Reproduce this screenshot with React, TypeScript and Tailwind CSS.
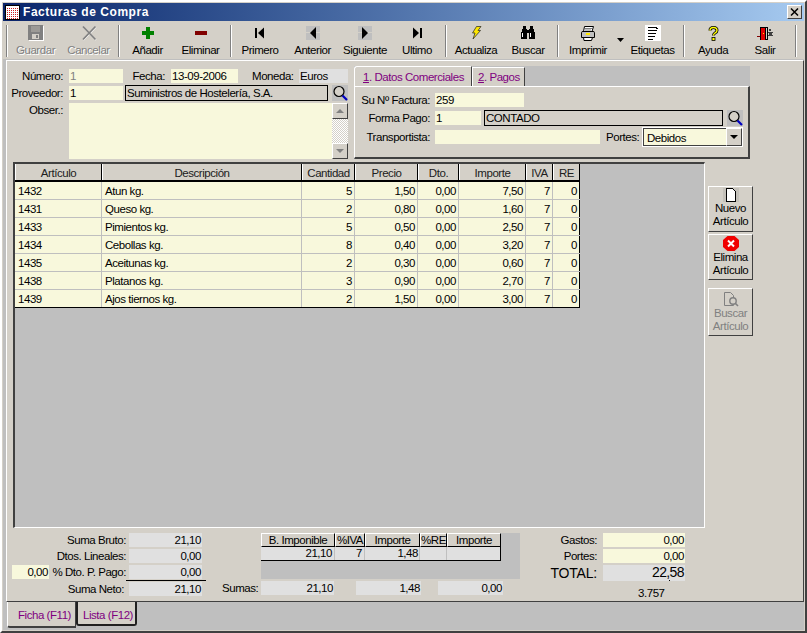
import type { ReactNode } from 'react';

const FONT = "font-['Liberation_Sans',Arial,sans-serif]";

const SaveIcon = () => (
  <svg width="16" height="16" viewBox="0 0 16 16" shapeRendering="crispEdges">
    <rect x="1" y="1" width="15" height="15" fill="#fff" />
    <rect x="0" y="0" width="15" height="15" fill="#808080" />
    <rect x="3" y="1" width="9" height="6" fill="#9c9a96" />
    <rect x="4" y="9" width="7" height="5" fill="#d4d0c8" />
    <rect x="8" y="10" width="2" height="3" fill="#808080" />
  </svg>
);

const CancelIcon = () => (
  <svg width="16" height="16" viewBox="0 0 16 16">
    <path d="M2.5 2 L15 15 M15 2 L2.5 15" stroke="#fff" strokeWidth="1.2" fill="none" />
    <path d="M2 1.5 L14.5 14.5 M14.5 1.5 L2 14.5" stroke="#808080" strokeWidth="1.8" fill="none" />
  </svg>
);

const PlusIcon = () => (
  <svg width="14" height="14" viewBox="0 0 14 14" shapeRendering="crispEdges">
    <rect x="5" y="1" width="4" height="12" fill="#008000" />
    <rect x="1" y="5" width="12" height="4" fill="#008000" />
  </svg>
);

const MinusIcon = () => (
  <svg width="14" height="14" viewBox="0 0 14 14" shapeRendering="crispEdges">
    <rect x="1" y="5" width="12" height="4" fill="#800000" />
  </svg>
);

const FirstIcon = () => (
  <svg width="12" height="12" viewBox="0 0 12 12">
    <rect x="1" y="1" width="2" height="10" fill="#000" />
    <path d="M10 0.5 V11.5 L4 6 Z" fill="#000" />
  </svg>
);

const PrevIcon = () => (
  <svg width="14" height="14" viewBox="0 0 14 14">
    <rect width="14" height="14" fill="#bfbfbf" />
    <rect y="6" x="0" width="14" height="1" fill="#d4d0c8" />
    <path d="M10 1 V13 L4 7 Z" fill="#000" />
  </svg>
);

const NextIcon = () => (
  <svg width="14" height="14" viewBox="0 0 14 14">
    <rect width="14" height="14" fill="#bfbfbf" />
    <rect y="6" x="0" width="14" height="1" fill="#d4d0c8" />
    <path d="M4 1 V13 L10 7 Z" fill="#000" />
  </svg>
);

const LastIcon = () => (
  <svg width="12" height="12" viewBox="0 0 12 12">
    <rect x="9" y="1" width="2" height="10" fill="#000" />
    <path d="M2 0.5 V11.5 L8 6 Z" fill="#000" />
  </svg>
);

const BoltIcon = () => (
  <svg width="11" height="14" viewBox="0 0 11 14">
    <path d="M5.5 0.5 L10 0.5 L7 4.5 L9.5 4.5 L2 13 L4 7 L1.5 7 Z" fill="#ffe800" stroke="#202020" strokeWidth="0.7" />
  </svg>
);

const BinocularsIcon = () => (
  <svg width="16" height="14" viewBox="0 0 16 14" shapeRendering="crispEdges">
    <rect x="3" y="0" width="3" height="3" fill="#000" />
    <rect x="10" y="0" width="3" height="3" fill="#000" />
    <rect x="2" y="3" width="5" height="3" fill="#000" />
    <rect x="9" y="3" width="5" height="3" fill="#000" />
    <rect x="7" y="4" width="2" height="3" fill="#000" />
    <rect x="1" y="6" width="6" height="7" fill="#000" />
    <rect x="9" y="6" width="6" height="7" fill="#000" />
    <rect x="2" y="7" width="1" height="4" fill="#fff" />
    <rect x="10" y="7" width="1" height="4" fill="#fff" />
  </svg>
);

const PrinterIcon = () => (
  <svg width="16" height="15" viewBox="0 0 16 15">
    <path d="M4.5 0.5 H13.5 L12 5.5 H3.5 Z" fill="#fff" stroke="#000" />
    <path d="M5 2.5 H12 M5 4 H11" stroke="#808080" />
    <path d="M1.5 6.5 Q1.5 5.5 3 5.5 H13 Q14.5 5.5 14.5 6.5 V11.5 H1.5 Z" fill="#c0c0c0" stroke="#000" />
    <rect x="6" y="7" width="4" height="2" fill="#ffe800" />
    <path d="M3.5 11.5 H12.5 L11.5 14.5 H4 Z" fill="#fff" stroke="#000" />
  </svg>
);

const LabelsIcon = () => (
  <svg width="16" height="16" viewBox="0 0 16 16" shapeRendering="crispEdges">
    <rect width="16" height="16" fill="#fff" />
    <rect x="3" y="2" width="9" height="1" fill="#000" />
    <rect x="11" y="3" width="2" height="1" fill="#000" />
    <rect x="3" y="5" width="9" height="1" fill="#000" />
    <rect x="3" y="8" width="8" height="1" fill="#000" />
    <rect x="3" y="11" width="7" height="1" fill="#000" />
    <rect x="3" y="14" width="5" height="1" fill="#000" />
  </svg>
);

const HelpIcon = () => (
  <svg width="11" height="15" viewBox="0 0 11 15">
    <path d="M2 4.5 Q2 1.5 5.5 1.5 Q9 1.5 9 4.5 Q9 6 7 7 Q5.5 8 5.5 9.5" fill="none" stroke="#000" strokeWidth="3" />
    <path d="M2 4.5 Q2 1.5 5.5 1.5 Q9 1.5 9 4.5 Q9 6 7 7 Q5.5 8 5.5 9.5" fill="none" stroke="#ffff00" strokeWidth="1.4" />
    <rect x="4" y="11.5" width="3" height="3" fill="#ffff00" stroke="#000" strokeWidth="0.8" />
  </svg>
);

const ExitIcon = () => (
  <svg width="17" height="15" viewBox="0 0 17 15" shapeRendering="crispEdges">
    <rect x="0" y="10" width="4" height="1" fill="#800000" />
    <rect x="3" y="1" width="8" height="13" fill="#000" />
    <rect x="4" y="2" width="4" height="12" fill="#e00000" />
    <rect x="6" y="7" width="1" height="1" fill="#ffe800" />
    <rect x="9" y="2" width="1" height="11" fill="#d4d0c8" />
    <rect x="12" y="3" width="2" height="2" fill="#404040" />
    <rect x="11" y="6" width="5" height="1" fill="#404040" />
    <rect x="12" y="7" width="3" height="2" fill="#404040" />
    <rect x="11" y="9" width="5" height="1" fill="#404040" />
  </svg>
);

const SearchIcon = () => (
  <svg width="16" height="16" viewBox="0 0 16 16" className="shrink-0">
    <rect width="16" height="16" fill="#bfbfbf" />
    <circle cx="7" cy="6.5" r="5" fill="#d4d0c8" stroke="#000" strokeWidth="1.2" />
    <path d="M10.5 10.5 L15 15" stroke="#0000c0" strokeWidth="2.2" />
  </svg>
);

const NewDocIcon = () => (
  <svg width="16" height="14" viewBox="0 0 16 14" shapeRendering="crispEdges">
    <rect width="16" height="14" fill="#c4c1ba" />
    <path d="M3.5 0.5 H9.5 L12.5 3.5 V13.5 H3.5 Z" fill="#fff" stroke="#000" />
  </svg>
);

const DeleteIcon = () => (
  <svg width="16" height="15" viewBox="0 0 16 15">
    <path d="M4.5 0 H11.5 L16 4 V11 L11.5 15 H4.5 L0 11 V4 Z" fill="#f00000" />
    <path d="M5 4.5 L11 10.5 M11 4.5 L5 10.5" stroke="#fff" strokeWidth="2" />
  </svg>
);

const FindDocIcon = () => (
  <svg width="16" height="16" viewBox="0 0 16 16">
    <path d="M1.5 1.5 H7.5 L10.5 4.5 V14.5 H1.5 Z" fill="#d4d0c8" stroke="#808080" />
    <circle cx="10" cy="10" r="3.2" fill="#d4d0c8" stroke="#808080" strokeWidth="1.4" />
    <path d="M12.5 12.5 L15 15" stroke="#808080" strokeWidth="1.6" />
  </svg>
);

const GridAppIcon = () => (
  <svg width="15" height="15" viewBox="0 0 15 15" shapeRendering="crispEdges">
    <rect width="15" height="15" fill="#000" />
    <rect x="1" y="1" width="13" height="13" fill="#fff" />
    <path d="M2 3 H13 M2 5 H13 M2 7 H13 M2 9 H13 M2 11 H13 M2 13 H13" stroke="#d02020" strokeWidth="1" strokeDasharray="1 1" />
  </svg>
);

const Sep = () => <div className="w-[2px] h-[32px] border-l border-[#808080] border-r-1 border-r-white shrink-0" />;

const Gap = ({ w }: { w: string }) => <div className={`${w} shrink-0`} />;

const ToolButton = ({ icon, label, disabled, w }: { icon: ReactNode; label: string; disabled?: boolean; w: string }) => (
  <div className={`${w} shrink-0 flex flex-col items-center`}>
    <div className="h-[18px] flex items-center justify-center">{icon}</div>
    <span className={`mt-[1px] leading-[14px] whitespace-nowrap ${disabled ? 'text-[#808080] [text-shadow:1px_1px_0_#fff]' : 'text-black'}`}>{label}</span>
  </div>
);

const Label = ({ w, children, className }: { w: string; children: ReactNode; className?: string }) => (
  <span className={`${w} ${className ?? ''} shrink-0 text-right leading-[14px] whitespace-nowrap`}>{children}</span>
);

const Input = ({ w, value, className }: { w: string; value?: string; className?: string }) => (
  <div className={`${w} ${className ?? ''} shrink-0 h-[14px] bg-[#f8f8dc] leading-[14px] px-[1px] whitespace-nowrap overflow-hidden`}>{value}</div>
);

const Gray = ({ w, value, className }: { w: string; value?: string; className?: string }) => (
  <div className={`${w} ${className ?? ''} shrink-0 h-[14px] bg-[#e0e0e0] leading-[14px] px-[1px] whitespace-nowrap overflow-hidden`}>{value}</div>
);

const LookupBox = ({ w, value }: { w: string; value: string }) => (
  <div className={`${w} shrink-0 h-[16px] border border-black bg-[#d4d0c8] leading-[14px] px-[1px] whitespace-nowrap`}>{value}</div>
);

const columns = [
  { name: 'Artículo', w: 'w-[87px]', align: 'text-left pl-[3px]' },
  { name: 'Descripción', w: 'w-[200px]', align: 'text-left pl-[3px]' },
  { name: 'Cantidad', w: 'w-[53px]', align: 'text-right pr-[2px]' },
  { name: 'Precio', w: 'w-[63px]', align: 'text-right pr-[2px]' },
  { name: 'Dto.', w: 'w-[41px]', align: 'text-right pr-[2px]' },
  { name: 'Importe', w: 'w-[67px]', align: 'text-right pr-[2px]' },
  { name: 'IVA', w: 'w-[27px]', align: 'text-right pr-[2px]' },
  { name: 'RE', w: 'w-[27px]', align: 'text-right pr-[2px]' },
];

const rows = [
  ['1432', 'Atun kg.', '5', '1,50', '0,00', '7,50', '7', '0'],
  ['1431', 'Queso kg.', '2', '0,80', '0,00', '1,60', '7', '0'],
  ['1433', 'Pimientos kg.', '5', '0,50', '0,00', '2,50', '7', '0'],
  ['1434', 'Cebollas kg.', '8', '0,40', '0,00', '3,20', '7', '0'],
  ['1435', 'Aceitunas kg.', '2', '0,30', '0,00', '0,60', '7', '0'],
  ['1438', 'Platanos kg.', '3', '0,90', '0,00', '2,70', '7', '0'],
  ['1439', 'Ajos tiernos kg.', '2', '1,50', '0,00', '3,00', '7', '0'],
];

const SideButton = ({ icon, top, bottom, disabled, h, iconBox }: { icon: ReactNode; top: string; bottom: string; disabled?: boolean; h: string; iconBox: string }) => (
  <div className={`w-[45px] ${h} bg-[#d4d0c8] border border-t-white border-l-white border-r-[#404040] border-b-[#404040] flex flex-col items-center leading-[13px] pt-[1px] ${disabled ? 'text-[#808080]' : 'text-black'}`}>
    <div className={`${iconBox} flex items-center justify-center shrink-0`}>{icon}</div>
    <span>{top}</span>
    <span>{bottom}</span>
  </div>
);

const HeadCell = ({ w, children }: { w: string; children: ReactNode }) => (
  <div className={`${w} shrink-0 h-[14px] border-t border-t-white border-l border-l-white border-r border-r-black border-b border-b-black bg-[#d4d0c8] text-center leading-[13px] whitespace-nowrap`}>{children}</div>
);

export default function App() {
  return (
    <div className={`${FONT} w-[807px] h-[633px] bg-[#d4d0c8] text-[11.5px] text-black border-2 border-t-white border-l-white border-r-[#404040] border-b-[#404040] p-[1px] flex flex-col overflow-hidden tracking-[-0.45px]`}>
      {/* barra de titulo */}
      <div className="h-[18px] shrink-0 bg-gradient-to-r from-[#0a246a] to-[#a6caf0] flex items-center pl-[2px] pr-[2px]">
        <GridAppIcon />
        <span className="ml-[3px] text-white font-bold text-[12px] tracking-[0.55px]">Facturas de Compra</span>
        <div className="ml-auto w-[15px] h-[14px] bg-[#d4d0c8] border border-t-white border-l-white border-r-[#404040] border-b-[#404040] flex items-center justify-center">
          <svg width="9" height="8" viewBox="0 0 9 8"><path d="M1 0.5 L8 7.5 M8 0.5 L1 7.5" stroke="#000" strokeWidth="1.5" /></svg>
        </div>
      </div>

      {/* barra de herramientas */}
      <div className="h-[38px] shrink-0 flex items-center pl-[3px] pt-[1px]">
        <Sep />
        <Gap w="w-[1px]" />
        <ToolButton w="w-[53px]" icon={<SaveIcon />} label="Guardar" disabled />
        <ToolButton w="w-[53px]" icon={<CancelIcon />} label="Cancelar" disabled />
        <Gap w="w-[3px]" />
        <Sep />
        <Gap w="w-[1px]" />
        <ToolButton w="w-[53px]" icon={<PlusIcon />} label="Añadir" />
        <ToolButton w="w-[53px]" icon={<MinusIcon />} label="Eliminar" />
        <Gap w="w-[3px]" />
        <Sep />
        <Gap w="w-[2px]" />
        <ToolButton w="w-[52px]" icon={<FirstIcon />} label="Primero" />
        <ToolButton w="w-[53px]" icon={<PrevIcon />} label="Anterior" />
        <ToolButton w="w-[52px]" icon={<NextIcon />} label="Siguiente" />
        <ToolButton w="w-[52px]" icon={<LastIcon />} label="Ultimo" />
        <Gap w="w-[2px]" />
        <Sep />
        <Gap w="w-[3px]" />
        <ToolButton w="w-[52px]" icon={<BoltIcon />} label="Actualiza" />
        <ToolButton w="w-[52px]" icon={<BinocularsIcon />} label="Buscar" />
        <Gap w="w-[3px]" />
        <Sep />
        <Gap w="w-[3px]" />
        <ToolButton w="w-[52px]" icon={<PrinterIcon />} label="Imprimir" />
        <div className="w-[12px] shrink-0 flex justify-center -mt-[2px]">
          <svg width="7" height="4" viewBox="0 0 7 4"><path d="M0 0 H7 L3.5 4 Z" fill="#000" /></svg>
        </div>
        <ToolButton w="w-[53px]" icon={<LabelsIcon />} label="Etiquetas" />
        <Gap w="w-[4px]" />
        <Sep />
        <Gap w="w-[2px]" />
        <ToolButton w="w-[52px]" icon={<HelpIcon />} label="Ayuda" />
        <ToolButton w="w-[52px]" icon={<ExitIcon />} label="Salir" />
        <Gap w="w-[4px]" />
        <Sep />
      </div>

      {/* ficha */}
      <div className="flex-1 min-h-0 bg-[#bfbfbf] flex flex-col pt-[1px] pl-[3px]">
        <div className="h-[542px] shrink-0 bg-[#d4d0c8] border-t border-l border-t-white border-l-white border-r border-b border-r-[#404040] border-b-[#404040] flex flex-col">
          <div className="h-[101px] shrink-0 flex">
            <div className="w-[347px] shrink-0 pt-[8px] flex flex-col">
              <div className="flex items-center h-[14px]">
                <Label w="w-[56px]">Número:</Label>
                <Input w="w-[54px] ml-[6px]" value="1" className="text-[#808080]" />
                <Label w="w-[33px] ml-[9px]">Fecha:</Label>
                <Input w="w-[67px] ml-[6px]" value="13-09-2006" />
                <Label w="w-[41px] ml-[14px]">Moneda:</Label>
                <Gray w="w-[49px] ml-[6px]" value="Euros" />
              </div>
              <div className="flex items-center h-[14px] mt-[3px]">
                <Label w="w-[56px]">Proveedor:</Label>
                <Input w="w-[54px] ml-[6px]" value="1" />
                <div className="ml-[2px]"><LookupBox w="w-[203px]" value="Suministros de Hostelería, S.A." /></div>
                <div className="ml-[4px]"><SearchIcon /></div>
              </div>
              <div className="flex mt-[3px]">
                <Label w="w-[56px]">Obser.:</Label>
                <div className="ml-[6px] w-[263px] h-[56px] bg-[#f8f8dc] shrink-0" />
                <div className="w-[16px] h-[56px] shrink-0 flex flex-col bg-[repeating-conic-gradient(#d4d0c8_0%_25%,#ffffff_0%_50%)] bg-[length:2px_2px]">
                  <div className="h-[16px] bg-[#d4d0c8] border border-t-white border-l-white border-r-[#404040] border-b-[#404040] flex items-center justify-center">
                    <svg width="8" height="4" viewBox="0 0 8 4"><path d="M4 0 L8 4 H0 Z" fill="#808080" /></svg>
                  </div>
                  <div className="flex-1" />
                  <div className="h-[16px] bg-[#d4d0c8] border border-t-white border-l-white border-r-[#404040] border-b-[#404040] flex items-center justify-center">
                    <svg width="8" height="4" viewBox="0 0 8 4"><path d="M0 0 H8 L4 4 Z" fill="#808080" /></svg>
                  </div>
                </div>
              </div>
            </div>

            {/* pestañas de datos */}
            <div className="w-[396px] shrink-0 pt-[5px] flex flex-col">
              <div className="h-[20px] shrink-0 bg-[#bfbfbf] flex items-end">
                <div className="w-[118px] h-[20px] bg-[#d4d0c8] border-t border-l border-white border-r border-r-[#404040] rounded-tl-[3px] text-[#800080] leading-[20px] pl-[8px] whitespace-nowrap">
                  <span className="underline">1</span>. Datos Comerciales
                </div>
                <div className="w-[53px] h-[19px] bg-[#d4d0c8] border-t border-l border-white border-r border-r-[#404040] text-[#800080] leading-[19px] pl-[5px] whitespace-nowrap">
                  <span className="underline">2</span>. Pagos
                </div>
              </div>
              <div className="h-[73px] shrink-0 border-t border-l border-t-white border-l-white border-r-2 border-b-2 border-r-[#404040] border-b-[#404040] pt-[6px] flex flex-col">
                <div className="flex items-center h-[14px]">
                  <Label w="w-[75px]">Su Nº Factura:</Label>
                  <Input w="w-[89px] ml-[5px]" value="259" />
                </div>
                <div className="flex items-center h-[14px] mt-[4px]">
                  <Label w="w-[75px]">Forma Pago:</Label>
                  <Input w="w-[46px] ml-[5px]" value="1" />
                  <div className="ml-[3px]"><LookupBox w="w-[239px]" value="CONTADO" /></div>
                  <div className="ml-[4px]"><SearchIcon /></div>
                </div>
                <div className="flex items-center h-[14px] mt-[5px]">
                  <Label w="w-[75px]">Transportista:</Label>
                  <Input w="w-[165px] ml-[5px]" />
                  <Label w="w-[32px] ml-[6px]">Portes:</Label>
                  <div className="ml-[4px] w-[101px] h-[20px] shrink-0 border border-white flex">
                    <div className="flex-1 border border-[#404040] border-r-0 bg-[#f8f8dc] leading-[18px] pl-[3px]">Debidos</div>
                    <div className="w-[16px] border border-t-white border-l-white border-r-[#404040] border-b-[#404040] bg-[#d4d0c8] flex items-center justify-center">
                      <svg width="8" height="4" viewBox="0 0 8 4"><path d="M0 0 H8 L4 4 Z" fill="#000" /></svg>
                    </div>
                  </div>
                </div>
              </div>
            </div>
          </div>

          {/* rejilla de articulos */}
          <div className="h-[366px] shrink-0 flex ml-[6px]">
            <div className="w-[692px] shrink-0 bg-[#bfbfbf] border-t-2 border-l-2 border-t-[#404040] border-l-[#404040] border-r border-b border-r-white border-b-white">
              <div className="w-[565px]">
                <div className="flex h-[18px] border-b-2 border-black bg-[#d4d0c8]">
                  {columns.map((c) => (
                    <div key={c.name} className={`${c.w} shrink-0 border-r border-r-black border-l border-l-white text-center leading-[18px] text-[#202020] whitespace-nowrap`}>{c.name}</div>
                  ))}
                </div>
                {rows.map((r, i) => (
                  <div key={r[0]} className={`flex h-[18px] bg-[#f8f8dc] border-b ${i === rows.length - 1 ? 'border-b-black' : 'border-b-[#bfbfbf]'}`}>
                    {r.map((v, j) => (
                      <div key={j} className={`${columns[j].w} ${columns[j].align} shrink-0 border-r ${j === 7 ? 'border-r-black' : 'border-r-[#bfbfbf]'} leading-[19px] whitespace-nowrap`}>{v}</div>
                    ))}
                  </div>
                ))}
              </div>
            </div>
            <div className="ml-[3px] mt-[24px] flex flex-col">
              <SideButton h="h-[46px]" iconBox="h-[14px]" icon={<NewDocIcon />} top="Nuevo" bottom="Artículo" />
              <div className="h-[2px]" />
              <SideButton h="h-[46px]" iconBox="h-[15px]" icon={<DeleteIcon />} top="Elimina" bottom="Artículo" />
              <div className="h-[8px]" />
              <SideButton h="h-[48px]" iconBox="h-[17px]" icon={<FindDocIcon />} top="Buscar" bottom="Artículo" disabled />
            </div>
          </div>

          {/* totales */}
          <div className="flex-1 flex pt-[5px]">
            <div className="w-[199px] shrink-0 flex flex-col">
              <div className="flex h-[14px]">
                <Label w="w-[119px]">Suma Bruto:</Label>
                <Gray w="w-[73px] ml-[3px]" value="21,10" className="text-right" />
              </div>
              <div className="flex h-[14px] mt-[2px]">
                <Label w="w-[119px]">Dtos. Lineales:</Label>
                <Gray w="w-[73px] ml-[3px]" value="0,00" className="text-right" />
              </div>
              <div className="flex h-[14px] mt-[2px]">
                <Input w="w-[37px] ml-[5px]" value="0,00" className="text-right" />
                <Label w="w-[77px]">% Dto. P. Pago:</Label>
                <Gray w="w-[73px] ml-[3px]" value="0,00" className="text-right" />
              </div>
              <div className="h-[1px] w-[80px] bg-black ml-[119px] mt-[1px]" />
              <div className="flex h-[14px] mt-[1px]">
                <Label w="w-[117px]">Suma Neto:</Label>
                <Gray w="w-[73px] ml-[5px]" value="21,10" className="text-right" />
              </div>
            </div>
            <div className="ml-[16px] w-[298px] shrink-0 flex flex-col">
              <div className="ml-[39px] w-[259px] h-[46px] bg-[#bfbfbf]">
                <div className="flex h-[14px] w-[240px]">
                  <HeadCell w="w-[74px]">B. Imponible</HeadCell>
                  <HeadCell w="w-[30px]">%IVA</HeadCell>
                  <HeadCell w="w-[55px]">Importe</HeadCell>
                  <HeadCell w="w-[27px]">%RE</HeadCell>
                  <HeadCell w="w-[54px]">Importe</HeadCell>
                </div>
                <div className="flex h-[14px] w-[240px] bg-[#e0e0e0] border-b border-b-black border-r border-r-black leading-[13px]">
                  <div className="w-[74px] text-right pr-[2px] border-r border-r-[#bfbfbf]">21,10</div>
                  <div className="w-[30px] text-right pr-[2px] border-r border-r-[#bfbfbf]">7</div>
                  <div className="w-[55px] text-right pr-[1px] border-r border-r-[#bfbfbf]">1,48</div>
                  <div className="w-[27px] border-r border-r-[#bfbfbf]" />
                </div>
              </div>
              <div className="flex h-[14px] mt-[2px]">
                <Label w="w-[35px]">Sumas:</Label>
                <Gray w="w-[73px] ml-[4px]" value="21,10" className="text-right" />
                <Gray w="w-[65px] ml-[22px]" value="1,48" className="text-right" />
                <Gray w="w-[65px] ml-[17px]" value="0,00" className="text-right" />
              </div>
            </div>
            <div className="w-[180px] shrink-0 flex flex-col">
              <div className="flex h-[14px]">
                <Label w="w-[77px]">Gastos:</Label>
                <Input w="w-[82px] ml-[6px]" value="0,00" className="text-right" />
              </div>
              <div className="flex h-[14px] mt-[2px]">
                <Label w="w-[77px]">Portes:</Label>
                <Input w="w-[82px] ml-[6px]" value="0,00" className="text-right" />
              </div>
              <div className="flex h-[16px] mt-[2px]">
                <span className="w-[77px] shrink-0 text-right text-[14px] leading-[16px] tracking-[-0.2px]">TOTAL:</span>
                <div className="w-[82px] ml-[6px] h-[16px] shrink-0 bg-[#e0e0e0] text-right text-[14px] leading-[15px] px-[1px] tracking-[-0.6px]">22,58</div>
              </div>
              <div className="flex mt-[5px] h-[14px] relative">
                <span className="ml-[118px] leading-[14px]">3.757</span>
                <span className="absolute left-[149px] -top-[6px] w-[1px] h-[1px] bg-black" />
              </div>
            </div>
          </div>
        </div>

        {/* pestañas inferiores */}
        <div className="flex-1 flex items-start">
          <div className="ml-[1px] w-[69px] h-[26px] bg-[#d4d0c8] border-l border-l-white border-b-2 border-b-[#404040] border-r border-r-[#404040] rounded-bl-[3px] text-[#800080] text-right pr-[4px] leading-[26px] whitespace-nowrap">Ficha (F11)</div>
          <div className="w-[61px] h-[24px] bg-[#d4d0c8] border-2 border-t-0 border-[#202020] rounded-b-[3px] text-[#800080] text-right pr-[2px] leading-[26px] whitespace-nowrap">Lista (F12)</div>
        </div>
      </div>
    </div>
  );
}
